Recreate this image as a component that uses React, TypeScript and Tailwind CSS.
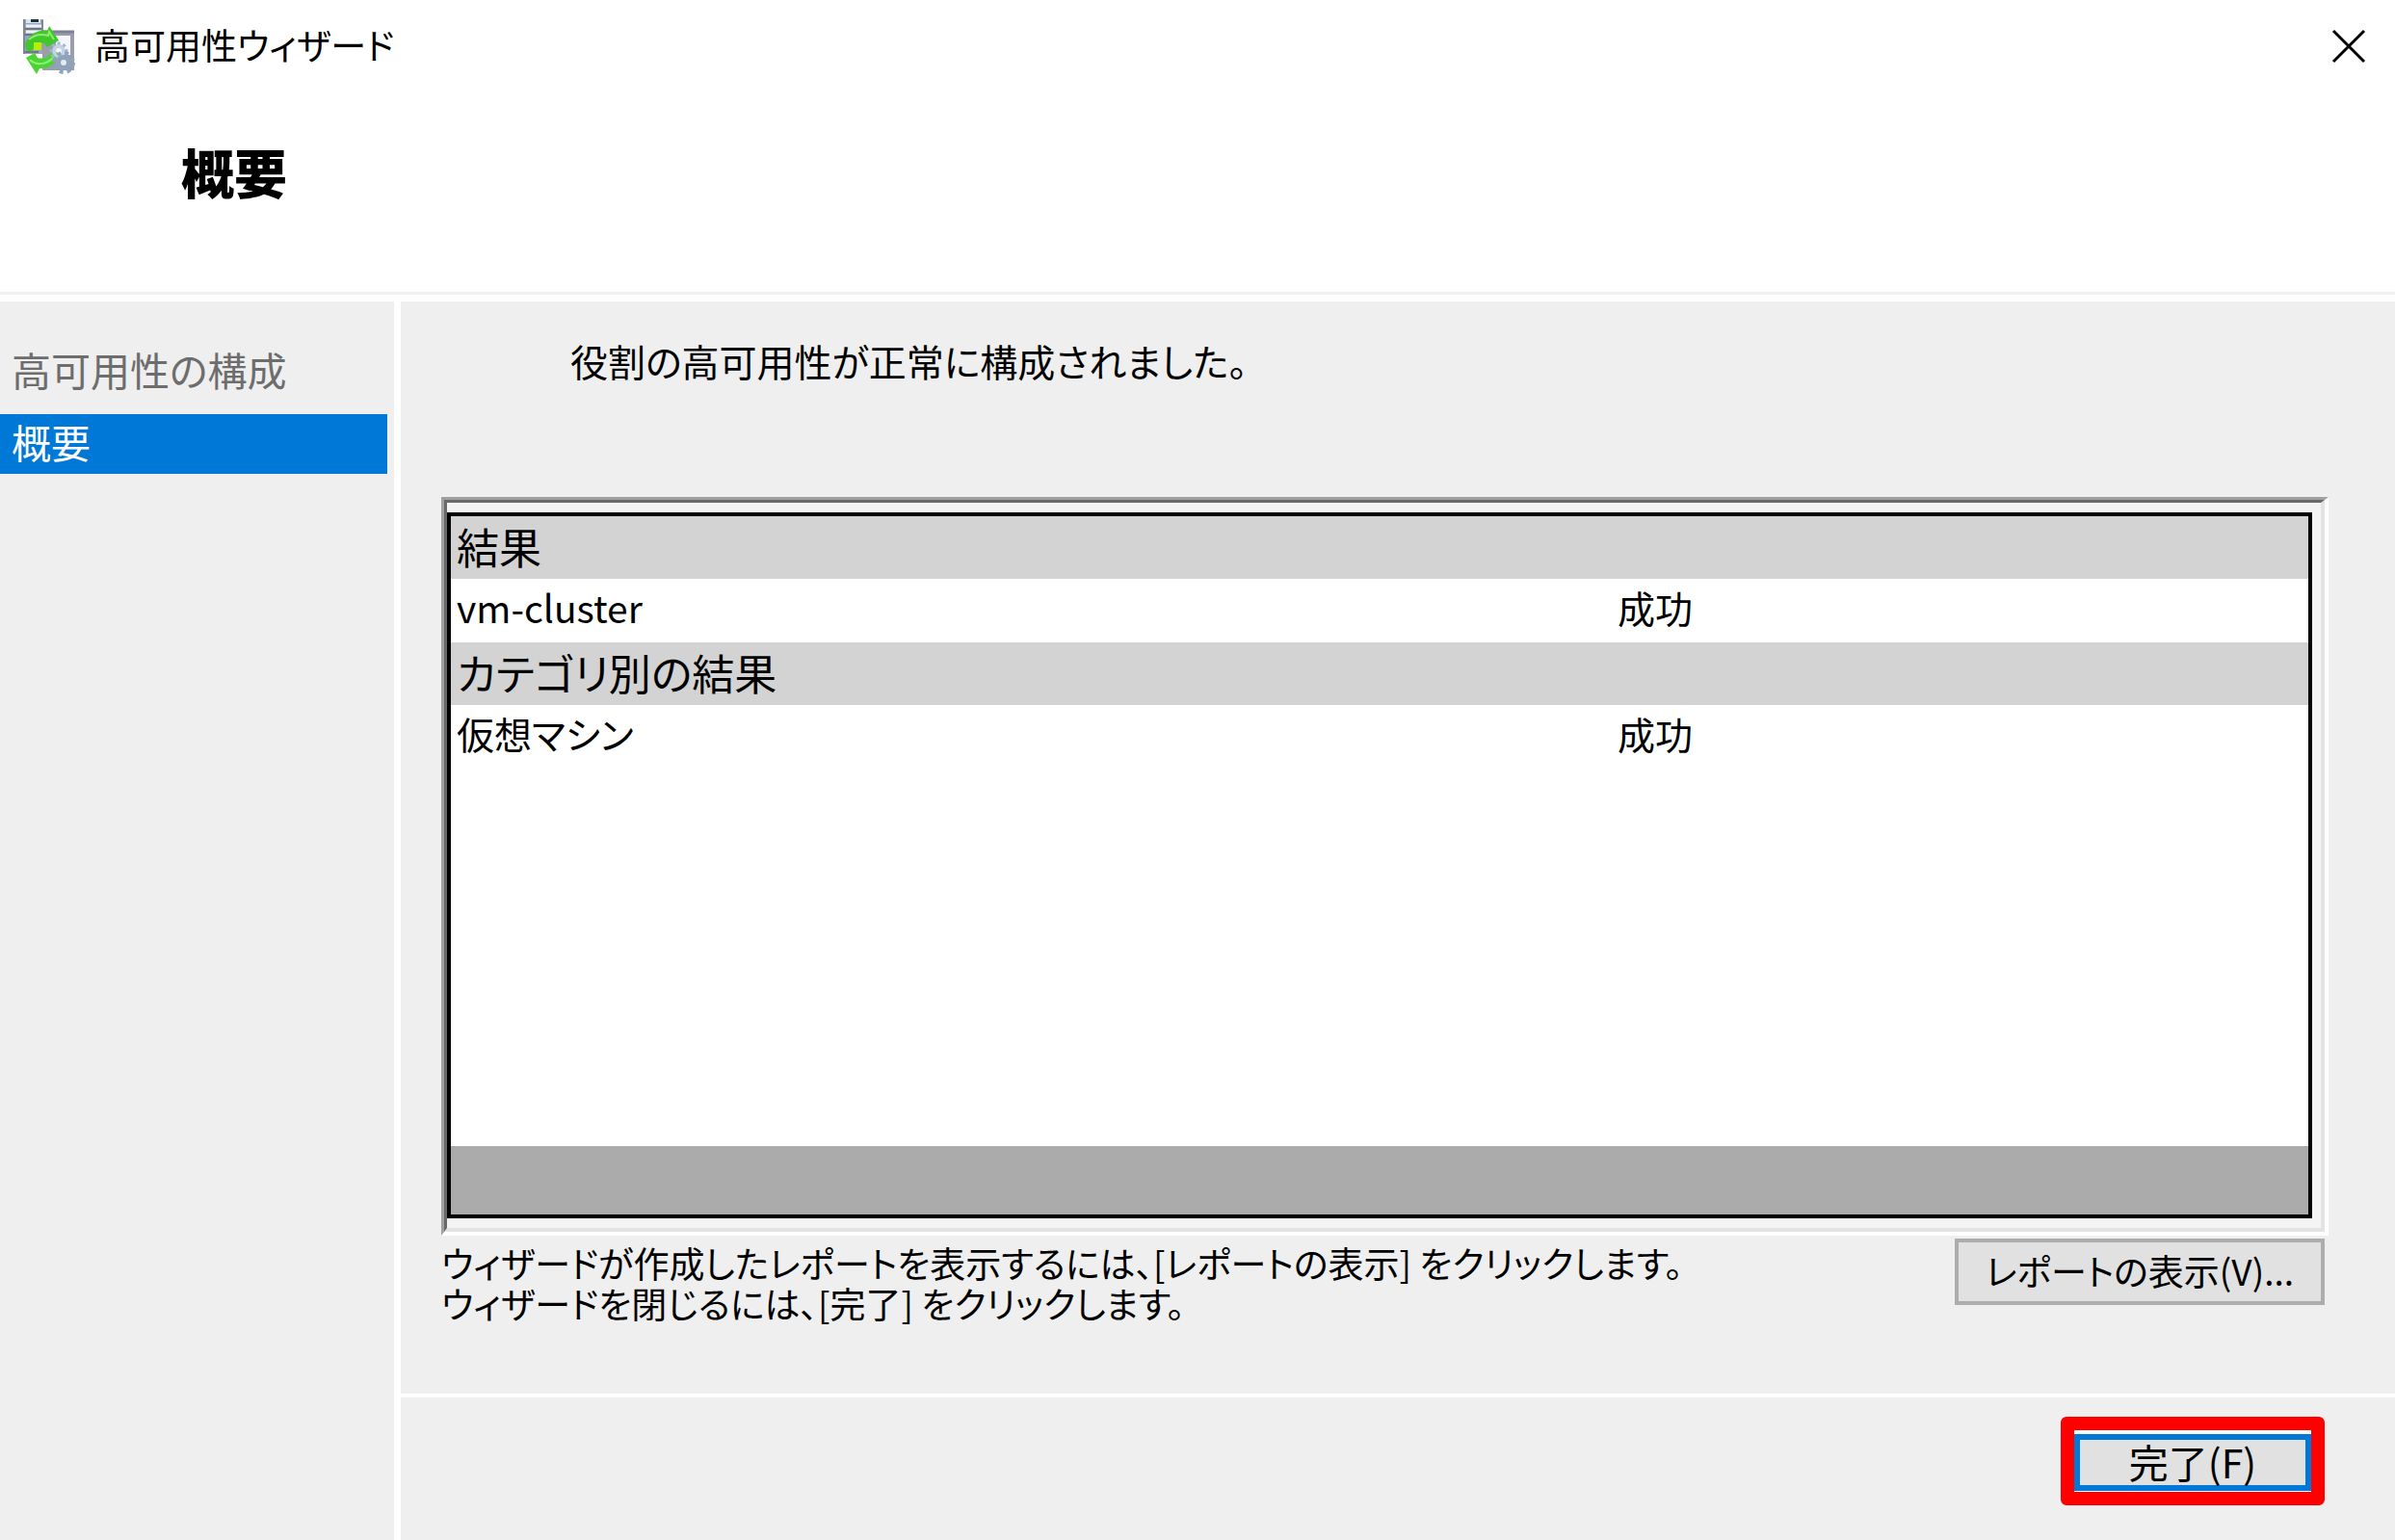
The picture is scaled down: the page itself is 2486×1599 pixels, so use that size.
import React, { useState } from 'react'

interface ResultRow {
    name: string;
    status: string;
}

interface ResultGroup {
    title: string;
    rows: ResultRow[];
}

const steps = ["高可用性の構成", "概要"];

const groups: ResultGroup[] = [
    { title: "結果", rows: [{ name: "vm-cluster", status: "成功" }] },
    { title: "カテゴリ別の結果", rows: [{ name: "仮想マシン", status: "成功" }] },
];

const WizardIcon = () => (
    <svg viewBox="0 0 54 58" className="h-[58px] w-[54px] shrink-0" aria-hidden="true">
        <rect x="1" y="1" width="20" height="36" fill="#9ba5b4" />
        <rect x="3" y="1" width="15" height="4" fill="#d5e6ee" />
        <rect x="8" y="1" width="8" height="3" fill="#1d3040" />
        <path d="M3 8h16M3 14h16" stroke="#eef2f6" strokeWidth="3" />
        <path d="M2 11h18M2 17h18M2 35h14" stroke="#6d7684" strokeWidth="2" />
        <path d="M1 1v36M20 2v12" stroke="#7f8896" strokeWidth="2" />
        <rect x="20" y="13" width="33" height="41" fill="#9a9dab" />
        <path d="M20 14h33" stroke="#7e8194" strokeWidth="3" />
        <rect x="34" y="18" width="15" height="20" fill="#f4f6fa" />
        <path d="M2 26C7 16 17 11 25 13L27 8L37 23L25 30L22 26C15 25 11 29 9 35L3 33Z" fill="#41c62e" />
        <path d="M6 22C12 17 19 16 26 18L27 14L32 22" stroke="#8cec6c" strokeWidth="2" fill="none" />
        <rect x="11" y="25" width="8" height="8" fill="#b4f000" />
        <path d="M3 41L12 36L15 41C21 43 27 40 31 33L38 37C35 47 26 53 17 52L14 58L3 41Z" fill="#4bd534" />
        <path d="M7 43C13 49 24 49 32 40" stroke="#93ee77" strokeWidth="2" fill="none" />
        <g stroke="#8fa3bd" fill="none">
            <circle cx="37" cy="34" r="5" strokeWidth="4" stroke="#c3d2e4" />
            <circle cx="37" cy="34" r="8" strokeWidth="3" strokeDasharray="3 3" stroke="#a4b7cf" />
            <circle cx="42" cy="46" r="6" strokeWidth="4" />
            <circle cx="42" cy="46" r="10" strokeWidth="4" strokeDasharray="4 4" />
        </g>
        <circle cx="42" cy="46" r="3" fill="#e3ebf4" />
    </svg>
)

const CloseIcon = () => (
    <svg viewBox="0 0 36 36" className="size-9" aria-hidden="true">
        <path d="M2 2L34 34M34 2L2 34" stroke="#000" strokeWidth="3" />
    </svg>
)

const ResultTable = () => (
    <table className="w-full table-fixed border-collapse text-left text-[39px]/[42px]">
        <colgroup>
            <col className="w-5/8" />
            <col />
        </colgroup>
        {groups.map((group) => (
            <tbody key={group.title}>
                <tr className="h-[65px] bg-[#d3d3d3]">
                    <th colSpan={2} scope="rowgroup" className="px-1.5 pt-0 pb-1 text-[44px]/[60px] font-normal">{group.title}</th>
                </tr>
                {group.rows.map((row) => (
                    <tr key={row.name} className="h-[66px]">
                        <td className="px-1.5 pt-0 pb-2">{row.name}</td>
                        <td className="px-1.5 pt-0 pb-2">{row.status}</td>
                    </tr>
                ))}
            </tbody>
        ))}
    </table>
)

const App = () => {
    const [current, setCurrent] = useState(1);

    return (
        <div className="flex min-h-screen flex-col bg-white font-['Noto_Sans_CJK_JP','Liberation_Sans',sans-serif] text-[41px]/[42px] text-black [font-feature-settings:'palt']">
            <div className="flex h-24 items-center justify-between pr-[30px] pl-6">
                <div className="flex items-center gap-5">
                    <WizardIcon />
                    <span className="pb-1 text-[37px]">高可用性ウィザード</span>
                </div>
                <button type="button" aria-label="閉じる"><CloseIcon /></button>
            </div>
            <header className="h-[207px] px-[188px] pt-[51px]">
                <h1 className="text-[55px]/[60px] font-black">概要</h1>
            </header>
            <div className="h-[10px] border-t-3 border-[#f0f0f0]"></div>

            <div className="flex flex-1 gap-[7px]">
                <nav className="w-[409px] shrink-0 bg-[#efefef] pt-[42px] pr-[7px]">
                    {steps.map((step, i) => (
                        <button
                            key={step}
                            type="button"
                            onClick={() => setCurrent(i)}
                            className={i === current
                                ? "block h-[62px] w-full bg-[#0078d7] px-3 pb-1.5 text-left text-white"
                                : "mb-[13px] block h-[62px] w-full px-3 pb-1.5 text-left text-[#6d6d6d]"}
                        >
                            {step}
                        </button>
                    ))}
                </nav>

                <div className="flex flex-1 flex-col bg-[#efefef]">
                    <main className="flex flex-1 flex-col pr-[69px] pl-[42px]">
                        <p className="h-[203px] pt-10 pl-[134px] text-[39px]">役割の高可用性が正常に構成されました。</p>

                        <div className="flex flex-1 flex-col border-4 border-t-3 border-l-3 border-t-[#a0a0a0] border-r-white border-b-white border-l-[#a0a0a0]">
                            <div className="flex flex-1 flex-col border-4 border-t-3 border-l-3 border-t-[#696969] border-r-[#e3e3e3] border-b-[#e3e3e3] border-l-[#696969] bg-[#f4f4f4] pt-[10px] pr-[9px] pb-[10px]">
                                <div className="flex flex-1 flex-col justify-between border-4 border-black bg-white">
                                    <ResultTable />
                                    <div className="h-[71px] bg-[#ababab]"></div>
                                </div>
                            </div>
                        </div>

                        <div className="flex h-[164px] items-start justify-between pt-[3px] text-[37px]">
                            <div className="pt-1">
                                <p>ウィザードが作成したレポートを表示するには、[レポートの表示] をクリックします。</p>
                                <p>ウィザードを閉じるには、[完了] をクリックします。</p>
                            </div>
                            <button type="button" className="mr-1 h-[69px] w-96 border-4 border-[#adadad] bg-[#e1e1e1] pb-1">レポートの表示(V)...</button>
                        </div>
                    </main>

                    <footer className="flex h-[152px] items-start justify-end border-t-4 border-white pt-5 pr-[73px]">
                        <div className="rounded-md border-14 border-[#ff0000] bg-white pt-1 pb-px">
                            <button type="button" className="block h-[59px] w-[246px] border-6 border-[#0078d7] bg-[#e1e1e1] pb-1">完了(F)</button>
                        </div>
                    </footer>
                </div>
            </div>
        </div>
    )
}

export default App
